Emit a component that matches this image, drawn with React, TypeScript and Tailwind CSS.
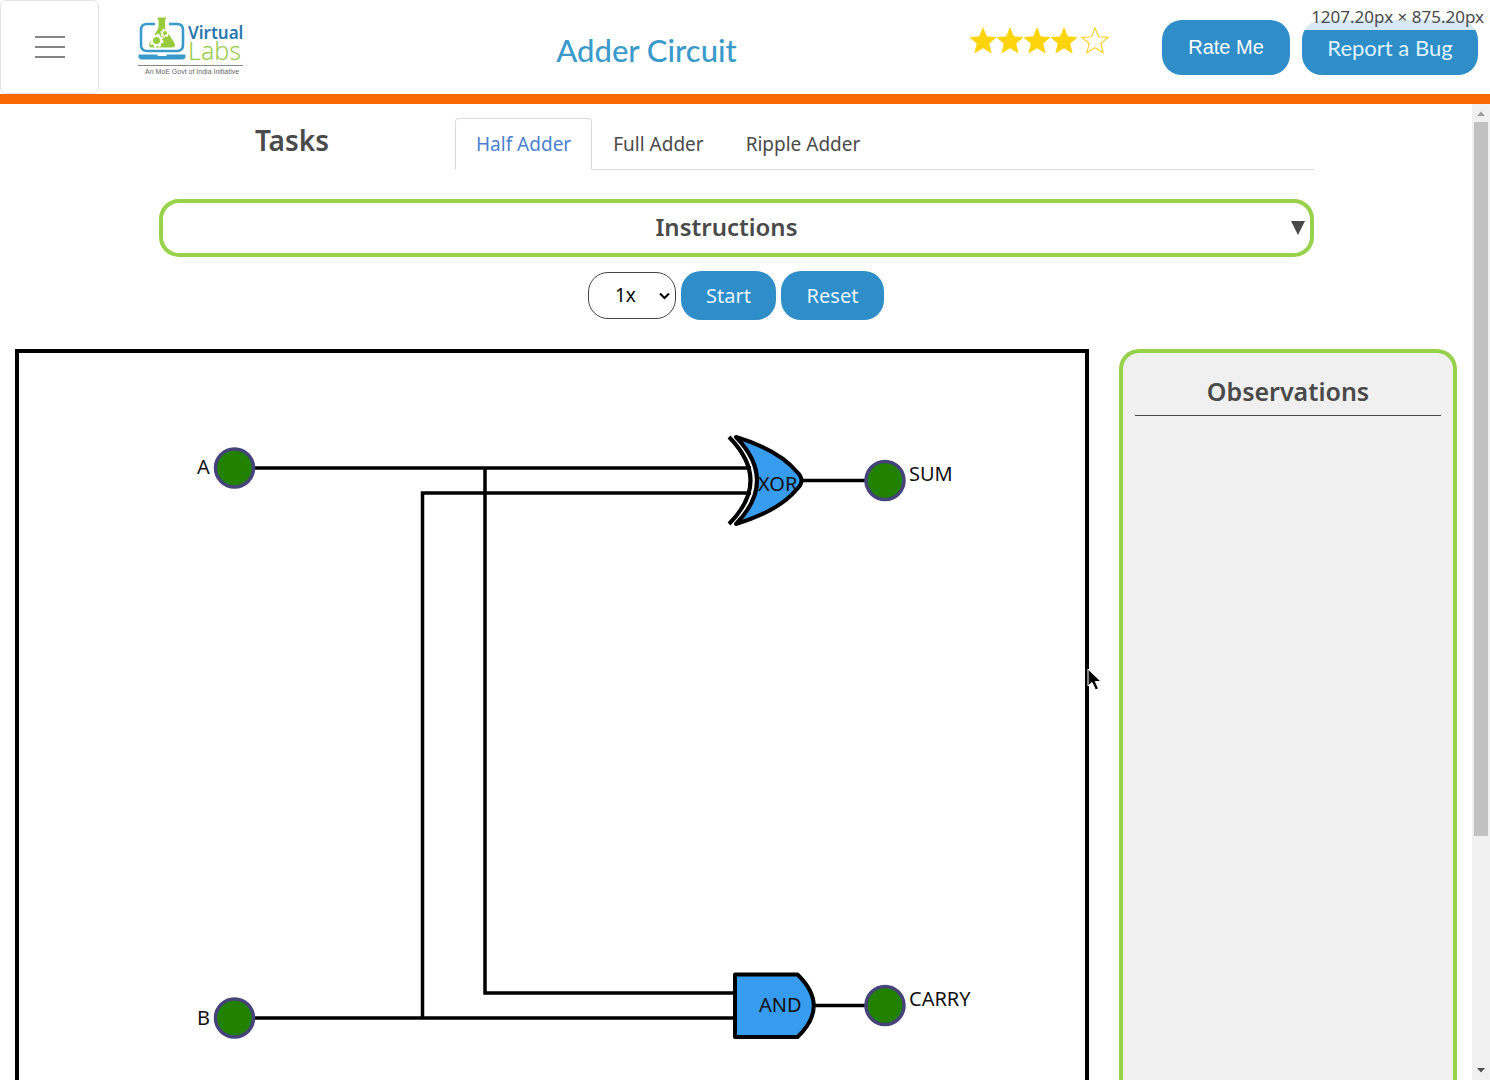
import React from "react";

const STAR = "M14 1 L17.6 9.8 L27 10.4 L19.8 16.5 L22.1 25.8 L14 20.8 L5.9 25.8 L8.2 16.5 L1 10.4 L10.4 9.8 Z";

function Stars() {
  return (
    <svg width="140" height="28" viewBox="0 0 140 28" role="img" aria-label="4 out of 5 stars">
      {[0, 27, 54, 81].map((x) => (
        <path key={x} d={STAR} transform={`translate(${x} 0)`} fill="#fdd409" stroke="#fdd409" strokeWidth="0.8" />
      ))}
      <path d={STAR} transform="translate(112 0)" fill="#fff" stroke="#f9d02c" strokeWidth="1.2" />
    </svg>
  );
}

function Logo() {
  return (
    <svg width="108" height="60" viewBox="0 0 108 60" role="img" aria-label="Virtual Labs">
      <path
        d="M17 7 H9 Q3 7 3 13 V28 Q3 34 9 34 H39 Q45 34 45 28 V13 Q45 7 39 7 H31"
        fill="none"
        stroke="#3a9bcb"
        strokeWidth="2.6"
      />
      <path d="M0.500 37.500 H19.500 V39 H28.500 V37.500 H47.500 V39.500 Q47.500 42.500 44 42.500 H4 Q0.500 42.500 0.500 39.500 Z" fill="#3a9bcb" />
      <path d="M19.500 0.500 H28 V2.500 H27 V11 L36.500 26 Q38 30.500 34 30.500 H14 Q10 30.500 11.500 26 L20.500 11 V2.500 H19.500 Z" fill="#98cb3b" />
      <circle cx="18.500" cy="23.500" r="4.600" fill="none" stroke="#fff" strokeWidth="2.200" />
      <circle cx="18.500" cy="23.500" r="6.300" fill="none" stroke="#fff" strokeWidth="1.600" strokeDasharray="2.470 2.470" />
      <circle cx="27" cy="16" r="2.800" fill="none" stroke="#fff" strokeWidth="1.500" />
      <circle cx="27" cy="16" r="4" fill="none" stroke="#fff" strokeWidth="1.200" strokeDasharray="1.570 1.570" />
      <text x="50" y="22" fontFamily="'Noto Sans', sans-serif" fontWeight="600" fontSize="17" fill="#2878ae">Virtual</text>
      <text x="50" y="43" fontFamily="'Noto Sans', sans-serif" fontWeight="300" fontSize="25" fill="#98cb4b">Labs</text>
      <path d="M0 48.500 H105" stroke="#888" strokeWidth="1" />
      <text x="7" y="57" fontFamily="'Liberation Sans', sans-serif" fontSize="7" fill="#666">An MoE Govt of India Initiative</text>
    </svg>
  );
}

function Header() {
  return (
    <header className="flex h-26 shrink-0 items-center border-b-[10px] border-[#f86703] bg-white">
      <button aria-label="Menu" className="flex h-[94px] w-[99px] shrink-0 flex-col items-center justify-center gap-2 rounded-md border border-[#e4e4e4]">
        <span className="h-0.5 w-[30px] bg-[#858585]" />
        <span className="h-0.5 w-[30px] bg-[#858585]" />
        <span className="h-0.5 w-[30px] bg-[#858585]" />
      </button>
      <a href="#home" className="ml-[39px] shrink-0">
        <Logo />
      </a>
      <h1 className="flex-1 pt-1.5 pl-[78px] text-center font-[Lato] text-[31px] leading-10 font-medium text-[#3a9bcb]">
        Adder Circuit
      </h1>
      <div className="mb-3 shrink-0">
        <Stars />
      </div>
      <button className="ml-[53px] h-[55px] w-32 shrink-0 rounded-[20px] bg-[#2f8dc8] font-['Liberation_Sans'] text-xl text-white">
        Rate Me
      </button>
      <button className="mr-3 ml-3 h-[55px] w-44 shrink-0 rounded-[20px] bg-[#2f8dc8] font-[Lato] text-[22px] text-[#dff3ff]">
        Report a Bug
      </button>
    </header>
  );
}

const tabs = ["Half Adder", "Full Adder", "Ripple Adder"];

function Tasks() {
  return (
    <div className="flex items-start gap-[30px] pt-[14px] pr-[158px] pl-[159px]">
      <h2 className="w-[266px] shrink-0 pt-1 text-center text-[28px] leading-9 font-semibold">Tasks</h2>
      <nav className="flex flex-1 border-b border-[#dbdbdb]" aria-label="Tasks">
        {tabs.map((tab, i) => (
          <a
            key={tab}
            href="#task"
            className={
              i === 0
                ? "-mb-px rounded-t border border-[#dbdbdb] border-b-white bg-white px-5 pt-2.5 pb-2.5 text-[19px] leading-[30px] text-[#4a7fd0]"
                : "px-[21px] pt-[11px] pb-2.5 text-[19px] leading-[30px]"
            }
          >
            {tab}
          </a>
        ))}
      </nav>
    </div>
  );
}

function Controls() {
  return (
    <div className="flex h-[49px] items-center justify-center gap-[5px]">
      <div className="relative">
        <select
          aria-label="Speed"
          className="h-[47px] w-[88px] appearance-none rounded-[20px] border border-[#444] bg-white pl-[26px] text-[19px] text-black"
        >
          <option>1x</option>
          <option>2x</option>
          <option>4x</option>
        </select>
        <svg className="pointer-events-none absolute top-5 right-1.5" width="11" height="8" viewBox="0 0 11 8">
          <path d="M1 1.500 L5.500 6 L10 1.500" fill="none" stroke="#000" strokeWidth="2" />
        </svg>
      </div>
      <button className="h-[49px] w-[95px] rounded-[20px] bg-[#2f8dc8] text-xl text-[#e6f5ff]">Start</button>
      <button className="h-[49px] w-[103px] rounded-[20px] bg-[#2f8dc8] text-xl text-[#e6f5ff]">Reset</button>
    </div>
  );
}

const nodes = [
  { label: "A", x: 215.5, y: 115, tx: 178, ty: 121 },
  { label: "B", x: 215.5, y: 665, tx: 178, ty: 672 },
  { label: "SUM", x: 866, y: 127.5, tx: 890, ty: 128 },
  { label: "CARRY", x: 866, y: 652.5, tx: 890, ty: 653 },
];

function Circuit() {
  return (
    <svg className="block" width="1066" height="872" viewBox="0 0 1066 872" role="img" aria-label="Half adder circuit">
      <g fill="none" stroke="#000" strokeWidth="3.5">
        <path d="M236 115 H732" />
        <path d="M466 115 V640 H716" />
        <path d="M236 665 H716" />
        <path d="M403.5 665 V140 H732" />
        <path d="M782 127.5 H846" />
        <path d="M795 652.5 H846" />
      </g>
      <g stroke="#000" strokeWidth="4" strokeLinejoin="round">
        <path d="M717 84 Q760 97 778 119 Q787 127.5 778 136 Q760 158 717 171 Q759 127.500 717 84 Z" fill="#379bee" />
        <path d="M710 84 Q753 127.5 710 171" fill="none" />
        <path d="M716 621.5 H778.5 Q811 653 778.5 684 H716 Z" fill="#379bee" />
      </g>
      <g fill="#228200" stroke="#44447a" strokeWidth="3.5">
        {nodes.map((n) => (
          <circle key={n.label} cx={n.x} cy={n.y} r="19" />
        ))}
      </g>
      <g fontSize="20" fill="#111">
        {nodes.map((n) => (
          <text key={n.label} x={n.tx} y={n.ty}>
            {n.label}
          </text>
        ))}
        <text x="739" y="138">XOR</text>
        <text x="740" y="659">AND</text>
      </g>
    </svg>
  );
}

function Scrollbar() {
  return (
    <div aria-hidden="true" className="flex w-[18px] shrink-0 flex-col items-center bg-[#f0f0f0]">
      <svg className="shrink-0" width="18" height="18" viewBox="0 0 18 18">
        <path d="M5 12 L9 7.500 L13 12 Z" fill="#a0a0a0" />
      </svg>
      <div className="flex w-3.5 flex-1 flex-col">
        <div className="basis-[76%] bg-[#c1c1c1]" />
      </div>
      <svg className="shrink-0" width="18" height="18" viewBox="0 0 18 18">
        <path d="M5 6 L9 10.500 L13 6 Z" fill="#505050" />
      </svg>
    </div>
  );
}

export default function App() {
  return (
    <div className="relative flex h-screen flex-col overflow-hidden bg-white font-['Noto_Sans',sans-serif] text-[#4a4a4a]">
      <Header />
      <div className="flex min-h-0 flex-1">
        <main className="flex min-w-0 flex-1 flex-col overflow-hidden">
          <Tasks />
          <div className="pt-[29px] pr-[158px] pb-[14px] pl-[159px]">
            <button className="flex h-[58px] w-full items-center rounded-[20px] border-4 border-[#98d14b] pr-1 pb-0.5 text-2xl font-semibold">
              <span className="flex-1">Instructions</span>
              <svg width="16" height="16" viewBox="0 0 16 16" aria-hidden="true">
                <path d="M1 2 H15 L8 16 Z" fill="#4a4a4a" />
              </svg>
            </button>
          </div>
          <Controls />
          <div className="flex min-h-0 flex-1 gap-[30px] px-[15px] pt-[29px]">
            <section className="relative min-w-0 flex-1 border-4 border-b-0 border-black">
              <div className="h-full overflow-hidden">
                <Circuit />
              </div>
              <svg className="absolute top-[314px] -right-[18px]" width="18" height="26" viewBox="0 0 18 26" aria-hidden="true">
                <path
                  d="M3 2 V19 L7 15.500 L10.500 23 L13.500 21.500 L10.300 14.500 H16 Z"
                  fill="#000"
                  stroke="#fff"
                  strokeWidth="1"
                />
              </svg>
            </section>
            <aside className="w-[338px] shrink-0 rounded-t-[20px] border-4 border-b-0 border-[#98d14b] bg-[#f0f0f0] px-3 pt-5">
              <h2 className="border-b border-[#4a4a4a] pb-1.5 text-center text-[25px] leading-9 font-semibold">
                Observations
              </h2>
            </aside>
          </div>
        </main>
        <Scrollbar />
      </div>
      <div className="absolute top-0 right-0 h-[30px] bg-white/80 pr-1.5 pl-3 text-[17px] leading-[34px] text-[#4a4a4a]">
        1207.20px × 875.20px
      </div>
    </div>
  );
}
